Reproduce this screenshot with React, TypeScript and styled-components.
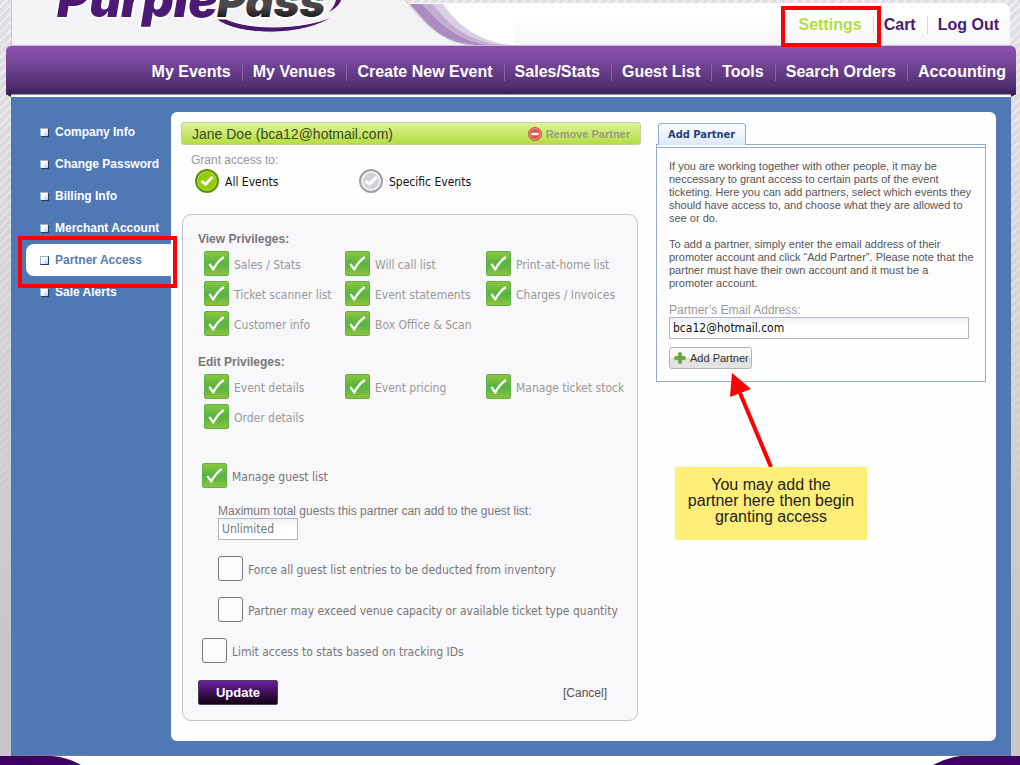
import React from "react";
import styled, { createGlobalStyle } from "styled-components";

const arial = '"Liberation Sans", Arial, sans-serif';
const tahoma = '"DejaVu Sans Condensed", Tahoma, sans-serif';

const GlobalStyle = createGlobalStyle`
  *, *::before, *::after { box-sizing: border-box; }
  body {
    margin: 0;
    font-family: ${arial};
    font-size: 12px;
    color: #555;
  }
  button, input { font: inherit; }
  a { text-decoration: none; }
`;

const Page = styled.div`
  min-height: 100vh;
  display: flex;
  flex-direction: column;
  background:
    linear-gradient(rgba(200, 198, 200, 0), #c8c6c8 640px),
    repeating-linear-gradient(135deg, #e1dfe3 0 4px, #f0eff1 4px 6px);
`;

const Header = styled.header`
  display: flex;
  align-items: stretch;
  height: 45px;
  margin: 0 10px 0 11px;
`;

const LogoArea = styled.a`
  flex: none;
  width: 389px;
  background: #f3f2f5;
  border-left: 1px solid #c9c8cc;
`;

const Swoosh = styled.svg`
  flex: none;
  display: block;
`;

const TopNav = styled.nav`
  flex: 1;
  display: flex;
  justify-content: flex-end;
  align-items: center;
  margin-top: 3px;
  padding-top: 2px;
  border-radius: 0 8px 0 0;
  background: linear-gradient(#fff 30%, #f5f4f7);
`;

const TopLink = styled.a<{ $active?: boolean }>`
  position: relative;
  padding: 0 11px 0 10px;
  font-size: 16px;
  line-height: 18px;
  font-weight: bold;
  color: ${(p) => (p.$active ? "#b3df3a" : "#4a1a70")};
  & + & { border-left: 1px solid #dcd4e4; }
`;

const MainNav = styled.nav`
  position: relative;
  display: flex;
  justify-content: flex-end;
  align-items: center;
  height: 50px;
  margin: 0 4px 0 6px;
  padding-top: 4px;
  border-top: 1px solid #cdb8dc;
  border-bottom: 1px solid #a08cb0;
  border-radius: 6px 6px 0 0;
  background: linear-gradient(#8850ac 10%, #4f2f70 85%, #3a2256);
  &::before, &::after {
    content: "";
    position: absolute;
    top: 48px;
    border-top: 3px solid #2b1640;
  }
  &::before { left: 0; border-left: 5px solid transparent; }
  &::after { right: 0; border-right: 5px solid transparent; }
`;

const MainLink = styled.a`
  padding: 0 11px 0 10px;
  font-size: 16px;
  line-height: 18px;
  font-weight: bold;
  color: #fff;
  & + & { border-left: 1px solid #8a62aa; }
  &:last-of-type { padding-right: 10px; }
`;

const Body = styled.div`
  display: flex;
  align-items: flex-start;
  margin: 0 9px 0 11px;
  padding: 15px 15px 14px 0;
  border-top: 2px solid #fff;
  border-bottom: 1px solid #7d7a86;
  background: #4e79b5;
`;

const Sidebar = styled.nav`
  flex: none;
  width: 160px;
  padding: 4px 0 0 15px;
`;

const SideLink = styled.a<{ $active?: boolean }>`
  position: relative;
  display: flex;
  align-items: center;
  gap: 6px;
  height: 32px;
  padding-left: 14px;
  border-radius: 8px 0 0 8px;
  font-weight: bold;
  white-space: nowrap;
  color: ${(p) => (p.$active ? "#5a7cb0" : "#fff")};
  background: ${(p) => (p.$active ? "#fff" : "transparent")};
`;

const Bullet = styled.span`
  width: 9px;
  height: 9px;
  border: 1px solid #9fb3cf;
  border-right-color: #1f3c66;
  border-bottom-color: #1f3c66;
  background: linear-gradient(135deg, #fff 30%, #b9c9e6);
`;

/* Red frame laid over an item to call attention to it */
const Highlight = styled.span<{ $inset: string }>`
  position: absolute;
  z-index: 2;
  inset: ${(p) => p.$inset};
  border: 4px solid #f00;
  pointer-events: none;
`;

const Panel = styled.main`
  flex: 1;
  min-width: 0;
  display: flex;
  align-items: flex-start;
  gap: 15px;
  padding: 10px 10px 20px;
  border-radius: 6px;
  background: #fefefe;
`;

const PartnerColumn = styled.section`
  flex: 1;
  min-width: 0;
`;

const PartnerBar = styled.header`
  display: flex;
  align-items: center;
  justify-content: space-between;
  height: 23px;
  padding: 0 10px;
  border: 1px solid #c3cf9d;
  border-radius: 3px;
  background: linear-gradient(#dcf398, #b5dd43);
`;

const PartnerName = styled.h1`
  margin: 0;
  font-size: 14px;
  font-weight: normal;
  color: #3c4a1c;
`;

const RemoveButton = styled.button`
  display: flex;
  align-items: center;
  gap: 4px;
  padding: 0;
  border: 0;
  background: none;
  font-size: 11px;
  font-weight: bold;
  color: #98a080;
`;

const AccessGroup = styled.fieldset`
  display: grid;
  grid-template-columns: 164px 1fr;
  margin: 0;
  padding: 0 0 0 14px;
  border: 0;
  height: 69px;
  align-content: start;
`;

const AccessLegend = styled.legend`
  height: 24px;
  margin-left: -4px;
  padding: 7px 0 0;
  line-height: 16px;
  color: #999;
`;

const RadioLabel = styled.label`
  display: flex;
  align-items: center;
  gap: 6px;
  font-family: ${tahoma};
  color: #111;
`;

const Caption = styled.span`
  padding-top: 2px;
`;

const Stack = styled.span`
  flex: none;
  display: inline-grid;
  & > * { grid-area: 1 / 1; }
  & > svg { pointer-events: none; }
`;

const RadioInput = styled.input`
  appearance: none;
  width: 24px;
  height: 24px;
  margin: 0;
  border-radius: 50%;
  border: 2px solid #a2a2a6;
  box-shadow: inset 0 0 0 2px #f4f4f6;
  background: #d2d2d6;
  &:checked {
    border-color: #5c9412;
    box-shadow: inset 0 0 0 1px #b5e04a;
    background: #92cc0c;
  }
`;

const PrivilegeBox = styled.form`
  margin: 0 3px 0 1px;
  padding: 16px 16px 15px 15px;
  border: 1px solid #c6c5ca;
  border-radius: 9px;
  background: #f8f7fa;
  color: #777;
`;

const GroupTitle = styled.h2`
  margin: 0 0 4px;
  font-size: 12px;
  line-height: 16px;
  font-weight: bold;
  color: #777;
`;

const PrivilegeGrid = styled.div`
  display: grid;
  grid-template-columns: 141px 141px 1fr;
  row-gap: 5px;
  margin: 0 0 18px 6px;
`;

const CheckRow = styled.label<{ $muted?: boolean }>`
  display: flex;
  align-items: center;
  gap: 5px;
  min-width: 0;
  white-space: nowrap;
  font-family: ${tahoma};
  color: ${(p) => (p.$muted ? "#999" : "#777")};
`;

const CheckInput = styled.input`
  appearance: none;
  width: 25px;
  height: 25px;
  margin: 0;
  border: 1px solid #777;
  border-radius: 3px;
  background: #fbfafc;
  & + svg { visibility: hidden; }
  &:checked {
    border-color: #5db14a;
    border-radius: 2px;
    background: linear-gradient(#8cc63f, #5cb540 45%, #5cb540 60%, #90c43c);
  }
  &:checked + svg { visibility: visible; }
`;

const GuestSettings = styled.div`
  display: grid;
  gap: 16px;
  margin: 34px 0 17px 4px;
`;

const Indented = styled.div`
  display: grid;
  gap: 16px;
  padding-left: 16px;
`;

const Field = styled.label`
  display: block;
  line-height: 14px;
`;

const TextInput = styled.input<{ $wide?: boolean }>`
  display: block;
  width: ${(p) => (p.$wide ? "100%" : "80px")};
  height: 22px;
  padding: 0 3px;
  border: 1px solid #b4b6c6;
  background: linear-gradient(#eef0f4, #fff 40%);
  font-family: ${tahoma};
  color: ${(p) => (p.$wide ? "#111" : "#777")};
`;

const Actions = styled.div`
  display: flex;
  align-items: center;
  justify-content: space-between;
  padding-right: 14px;
`;

const UpdateButton = styled.button`
  width: 80px;
  height: 25px;
  padding: 0;
  border: 1px solid #4b4150;
  border-radius: 2px;
  background: linear-gradient(#6a1fa0, #14020f);
  font-size: 13px;
  font-weight: bold;
  color: #fff;
`;

const CancelLink = styled.a`
  color: #555;
`;

const AddColumn = styled.aside`
  flex: none;
  width: 330px;
`;

const Tab = styled.h2`
  position: relative;
  width: 88px;
  height: 22px;
  margin: 1px 0 -1px 2px;
  padding: 0 9px;
  border: 1px solid #8fb0d3;
  border-bottom: 0;
  border-radius: 4px 4px 0 0;
  background: linear-gradient(#fff, #dbe8fb);
  font-family: ${tahoma};
  font-size: 11px;
  line-height: 21px;
  white-space: nowrap;
  color: #24427c;
`;

const AddBox = styled.form`
  padding: 2px 0 0;
  border: 1px solid #94abc8;
`;

const AddContent = styled.div`
  padding: 12px 16px 12px 12px;
  border-top: 1px solid #94abc8;
`;

const Blurb = styled.p`
  width: 306px;
  margin: 0 0 13px;
  font-size: 11px;
  line-height: 13px;
  color: #555;
`;

const EmailLabel = styled(Field)`
  color: #999;
`;

const AddButton = styled.button`
  display: flex;
  align-items: center;
  gap: 4px;
  height: 22px;
  margin-top: 8px;
  padding: 0 2px 0 4px;
  border: 1px solid #b4b4b4;
  border-radius: 3px;
  background: linear-gradient(#fafafa 50%, #dedede 52%, #e4e4e4);
  font-size: 11px;
  white-space: nowrap;
  color: #333;
`;

const Note = styled.div`
  position: relative;
  width: 192px;
  height: 73px;
  margin: 85px 0 0 19px;
  padding-top: 10px;
  background: #ffee78;
  font-size: 16px;
  line-height: 16px;
  text-align: center;
  color: #222;
`;

const Arrow = styled.svg`
  position: absolute;
  left: 50px;
  bottom: 100%;
`;

const Footer = styled.footer`
  flex: 1;
  min-height: 9px;
  display: flex;
  justify-content: space-between;
  align-items: flex-start;
  background: #fff;
`;

const viewPrivileges = [
  "Sales / Stats",
  "Will call list",
  "Print-at-home list",
  "Ticket scanner list",
  "Event statements",
  "Charges / Invoices",
  "Customer info",
  "Box Office & Scan",
];

const editPrivileges = ["Event details", "Event pricing", "Manage ticket stock", "Order details"];

const mainLinks = [
  "My Events",
  "My Venues",
  "Create New Event",
  "Sales/Stats",
  "Guest List",
  "Tools",
  "Search Orders",
  "Accounting",
];

const sideLinks = [
  "Company Info",
  "Change Password",
  "Billing Info",
  "Merchant Account",
  "Partner Access",
  "Sale Alerts",
];

function Check({ label, checked, muted }: { label: string; checked?: boolean; muted?: boolean }) {
  return (
    <CheckRow $muted={muted}>
      <Stack>
        <CheckInput type="checkbox" defaultChecked={checked} />
        <svg width="25" height="25" viewBox="0 0 25 25" aria-hidden="true">
          <path d="M5.3 13 L9.3 18.5 C12 13 15 9.5 19.8 6" fill="none" stroke="#fff" strokeWidth="2.2" strokeLinejoin="round" />
        </svg>
      </Stack>
      <Caption>{label}</Caption>
    </CheckRow>
  );
}

function Radio({ label, checked }: { label: string; checked?: boolean }) {
  return (
    <RadioLabel>
      <Stack>
        <RadioInput type="radio" name="access" defaultChecked={checked} />
        <svg width="24" height="24" viewBox="0 0 24 24" aria-hidden="true">
          <path d="M6.5 12 L10.5 15.3 L17.5 8" fill="none" stroke="#fff" strokeWidth="3" />
        </svg>
      </Stack>
      <Caption>{label}</Caption>
    </RadioLabel>
  );
}

function Logo() {
  return (
    <svg width="340" height="45" viewBox="12 0 340 45" role="img" aria-label="PurplePass">
      <defs>
        <linearGradient id="passInk" x1="0" y1="0" x2="0" y2="1">
          <stop offset="0.6" stopColor="#4a484c" />
          <stop offset="0.8" stopColor="#1c1a1c" />
        </linearGradient>
      </defs>
      <g fontFamily="Inter, sans-serif" fontWeight="900" fontStyle="italic" stroke="#fff" strokeWidth="4" paintOrder="stroke" strokeLinejoin="round">
        <text x="217" y="17" fontSize="44" fill="url(#passInk)">Pass</text>
        <text x="57" y="17" fontSize="49" fill="#4d1a73">Purple</text>
      </g>
      <path d="M216 19 C238 37 305 37 334 16 C306 29 252 31 226 19 Z" fill="#4b1770" stroke="#fff" strokeWidth="1" />
      <path d="M329 12 C336 8 340 4 341 0 L336 0 C335 4 333 8 329 12 Z" fill="#4b1770" />
    </svg>
  );
}

export default function App() {
  return (
    <Page>
      <GlobalStyle />
      <Header>
        <LogoArea href="#">
          <Logo />
        </LogoArea>
        <Swoosh width="115" height="45" viewBox="0 0 115 45" aria-hidden="true">
          <path d="M10 3 H115 V45 H60 Z" fill="#fff" />
          <path d="M0 0 H5 C28 26 44 43 74 45 H0 Z" fill="#f3f2f5" />
          <path d="M10 4 C30 28 46 44 76 45 H112 C80 42 58 26 43 4 Z" fill="#dccfe5" />
          <path d="M10 4 C30 28 46 44 76 45 H102 C72 42 50 28 33 4 Z" fill="#c3add3" />
          <path d="M10 4 C30 28 46 44 74 45 H90 C64 43 42 28 22 4 Z" fill="#ab8cc0" />
          <path d="M5 0 C28 28 44 43 74 45" fill="none" stroke="#c9c2cf" />
        </Swoosh>
        <TopNav>
          <TopLink href="#" $active>
            Settings
            <Highlight $inset="-10px -8px -13px -8px" />
          </TopLink>
          <TopLink href="#">Cart</TopLink>
          <TopLink href="#">Log Out</TopLink>
        </TopNav>
      </Header>
      <MainNav>
        {mainLinks.map((l) => (
          <MainLink href="#" key={l}>{l}</MainLink>
        ))}
      </MainNav>
      <Body>
        <Sidebar>
          {sideLinks.map((l) => {
            const active = l === "Partner Access";
            return (
              <SideLink href="#" key={l} $active={active}>
                <Bullet />
                {l}
                {active && <Highlight $inset="-8px -6px -12px -8px" />}
              </SideLink>
            );
          })}
        </Sidebar>
        <Panel>
          <PartnerColumn>
            <PartnerBar>
              <PartnerName>Jane Doe (bca12@hotmail.com)</PartnerName>
              <RemoveButton type="button">
                <svg width="14" height="14" viewBox="0 0 14 14" aria-hidden="true">
                  <circle cx="7" cy="7" r="6.5" fill="#d9534a" stroke="#c5564a" />
                  <circle cx="7" cy="7" r="5.4" fill="none" stroke="#f0a090" />
                  <rect x="3.5" y="5.7" width="7" height="2.6" rx="0.5" fill="#fff" />
                </svg>
                Remove Partner
              </RemoveButton>
            </PartnerBar>
            <AccessGroup>
              <AccessLegend>Grant access to:</AccessLegend>
              <Radio label="All Events" checked />
              <Radio label="Specific Events" />
            </AccessGroup>
            <PrivilegeBox>
              <GroupTitle>View Privileges:</GroupTitle>
              <PrivilegeGrid>
                {viewPrivileges.map((p) => (
                  <Check key={p} label={p} checked muted />
                ))}
              </PrivilegeGrid>
              <GroupTitle>Edit Privileges:</GroupTitle>
              <PrivilegeGrid>
                {editPrivileges.map((p) => (
                  <Check key={p} label={p} checked muted />
                ))}
              </PrivilegeGrid>
              <GuestSettings>
                <Check label="Manage guest list" checked />
                <Indented>
                  <Field>
                    Maximum total guests this partner can add to the guest list:
                    <TextInput defaultValue="Unlimited" />
                  </Field>
                  <Check label="Force all guest list entries to be deducted from inventory" />
                  <Check label="Partner may exceed venue capacity or available ticket type quantity" />
                </Indented>
                <Check label="Limit access to stats based on tracking IDs" />
              </GuestSettings>
              <Actions>
                <UpdateButton type="button">Update</UpdateButton>
                <CancelLink href="#">[Cancel]</CancelLink>
              </Actions>
            </PrivilegeBox>
          </PartnerColumn>
          <AddColumn>
            <Tab>Add Partner</Tab>
            <AddBox>
              <AddContent>
                <Blurb>
                  If you are working together with other people, it may be neccessary to grant access to
                  certain parts of the event ticketing. Here you can add partners, select which events they
                  should have access to, and choose what they are allowed to see or do.
                </Blurb>
                <Blurb>
                  To add a partner, simply enter the email address of their promoter account and click “Add
                  Partner”. Please note that the partner must have their own account and it must be a
                  promoter account.
                </Blurb>
                <EmailLabel>
                  Partner’s Email Address:
                  <TextInput $wide type="email" defaultValue="bca12@hotmail.com" />
                </EmailLabel>
                <AddButton type="button">
                  <svg width="12" height="12" viewBox="0 0 12 12" aria-hidden="true">
                    <path d="M6 2 V10 M2 6 H10" stroke="#6aa840" strokeWidth="4" strokeLinecap="round" />
                  </svg>
                  Add Partner
                </AddButton>
              </AddContent>
            </AddBox>
            <Note>
              You may add the
              <br />
              partner here then begin
              <br />
              granting access
              <Arrow width="50" height="94" viewBox="0 0 50 94" aria-hidden="true">
                <path d="M46 94 L15 20" stroke="#f00" strokeWidth="4" />
                <path d="M7 0 L26 16 L5 24 Z" fill="#f00" />
              </Arrow>
            </Note>
          </AddColumn>
        </Panel>
      </Body>
      <Footer>
        <svg width="81" height="9" viewBox="0 0 81 9" aria-hidden="true">
          <path d="M0 0 H52 C64 1 74 5 81 9 H0 Z" fill="#3d0063" />
          <path d="M11 0 L32 9" stroke="#25003d" />
        </svg>
        <svg width="87" height="9" viewBox="0 0 87 9" aria-hidden="true">
          <path d="M87 0 H28 C18 1 8 5 0 9 H87 Z" fill="#3d0063" />
        </svg>
      </Footer>
    </Page>
  );
}
